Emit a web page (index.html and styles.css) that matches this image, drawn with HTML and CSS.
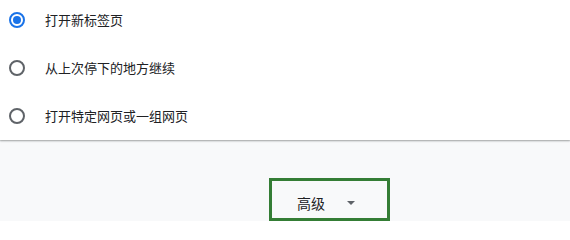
FILE: index.html
```html
<!DOCTYPE html>
<html lang="zh-CN">
<head>
<meta charset="utf-8">
<link rel="stylesheet" href="styles.css">
</head>
<body>
<div class="card">
  <div class="row">
    <span class="radio checked"></span>
    <span class="label">打开新标签页</span>
  </div>
  <div class="row">
    <span class="radio"></span>
    <span class="label">从上次停下的地方继续</span>
  </div>
  <div class="row">
    <span class="radio"></span>
    <span class="label">打开特定网页或一组网页</span>
  </div>
</div>
<div class="advanced-area">
  <div class="advanced-box">
    <span class="adv-text">高级</span>
    <span class="arrow"></span>
  </div>
</div>
</body>
</html>
```

FILE: styles.css
```css
html, body {
  margin: 0;
  padding: 0;
  background: #ffffff;
  font-family: "Noto Sans CJK SC", "Noto Sans", "Liberation Sans", sans-serif;
  color: #202124;
  overflow: hidden;
}
.card {
  background: #ffffff;
  margin-top: -4px;
  box-shadow: 0 1px 2px rgba(60, 64, 67, 0.35), 0 1px 1px rgba(60, 64, 67, 0.15);
  position: relative;
  z-index: 1;
}
.row {
  height: 48px;
  display: flex;
  align-items: center;
  padding-left: 9px;
}
.radio {
  box-sizing: border-box;
  width: 16px;
  height: 16px;
  border: 2px solid #5f6368;
  border-radius: 50%;
  display: flex;
  align-items: center;
  justify-content: center;
  flex: none;
}
.radio.checked {
  border-color: #1a73e8;
}
.radio.checked::after {
  content: "";
  width: 8px;
  height: 8px;
  border-radius: 50%;
  background: #1a73e8;
}
.label {
  margin-left: 20px;
  font-size: 13px;
  line-height: 20px;
  color: #202124;
}
.advanced-area {
  background: #f8f9fa;
  height: 81px;
  padding-top: 38px;
  padding-left: 269px;
  box-sizing: border-box;
}
.advanced-box {
  box-sizing: border-box;
  width: 121px;
  height: 43px;
  border: 3px solid #347d35;
  display: flex;
  align-items: center;
  padding-left: 25px;
  padding-top: 6px;
}
.adv-text {
  font-size: 14px;
  line-height: 20px;
  color: #202124;
}
.arrow {
  margin-left: 22px;
  width: 0;
  height: 0;
  border-left: 4px solid transparent;
  border-right: 4px solid transparent;
  border-top: 4px solid #5f6368;
  margin-top: 1px;
}
```
